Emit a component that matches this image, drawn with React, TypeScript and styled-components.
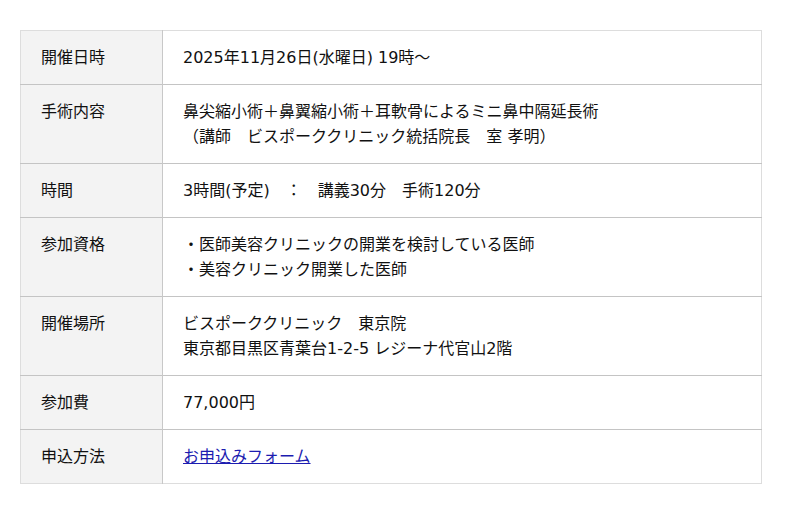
import React from 'react';
import styled, { createGlobalStyle } from 'styled-components';

const GlobalStyle = createGlobalStyle`
  html, body {
    margin: 0;
    padding: 0;
    background: #ffffff;
  }
  body {
    font-family: 'DejaVu Sans', 'Noto Sans CJK JP', sans-serif;
    color: #111;
  }
`;

const Wrapper = styled.div`
  padding: 30px 38px 0 20px;
`;

const Table = styled.table`
  width: 742px;
  border-collapse: collapse;
  border: 1px solid #dddddd;
  font-size: 16px;
  line-height: 25px;
`;

const Row = styled.tr`
  border-top: 1px solid #c4c4c4;
  &:first-child {
    border-top: 1px solid #dddddd;
  }
`;

const Label = styled.th`
  width: 101px;
  padding: 14px 20px;
  background: #f3f3f3;
  border-right: 1px solid #c8c8c8;
  text-align: left;
  vertical-align: top;
  font-weight: normal;
`;

const Value = styled.td`
  padding: 14px 20px;
  vertical-align: top;
`;

const Line = styled.div``;

const FormLink = styled.a`
  color: #1c1cb0;
  text-decoration: underline;
`;

const rows: { label: string; lines: React.ReactNode[] }[] = [
  { label: '開催日時', lines: ['2025年11月26日(水曜日) 19時～'] },
  {
    label: '手術内容',
    lines: ['鼻尖縮小術＋鼻翼縮小術＋耳軟骨によるミニ鼻中隔延長術', '（講師　ビスポーククリニック統括院長　室 孝明）'],
  },
  { label: '時間', lines: ['3時間(予定)　：　講義30分　手術120分'] },
  {
    label: '参加資格',
    lines: ['・医師美容クリニックの開業を検討している医師', '・美容クリニック開業した医師'],
  },
  {
    label: '開催場所',
    lines: ['ビスポーククリニック　東京院', '東京都目黒区青葉台1-2-5 レジーナ代官山2階'],
  },
  { label: '参加費', lines: ['77,000円'] },
  { label: '申込方法', lines: [<FormLink href="#">お申込みフォーム</FormLink>] },
];

const App: React.FC = () => {
  return (
    <>
      <GlobalStyle />
      <Wrapper>
        <Table>
          <tbody>
            {rows.map((r) => (
              <Row key={r.label}>
                <Label>{r.label}</Label>
                <Value>
                  {r.lines.map((l, i) => (
                    <Line key={i}>{l}</Line>
                  ))}
                </Value>
              </Row>
            ))}
          </tbody>
        </Table>
      </Wrapper>
    </>
  );
};

export default App;
